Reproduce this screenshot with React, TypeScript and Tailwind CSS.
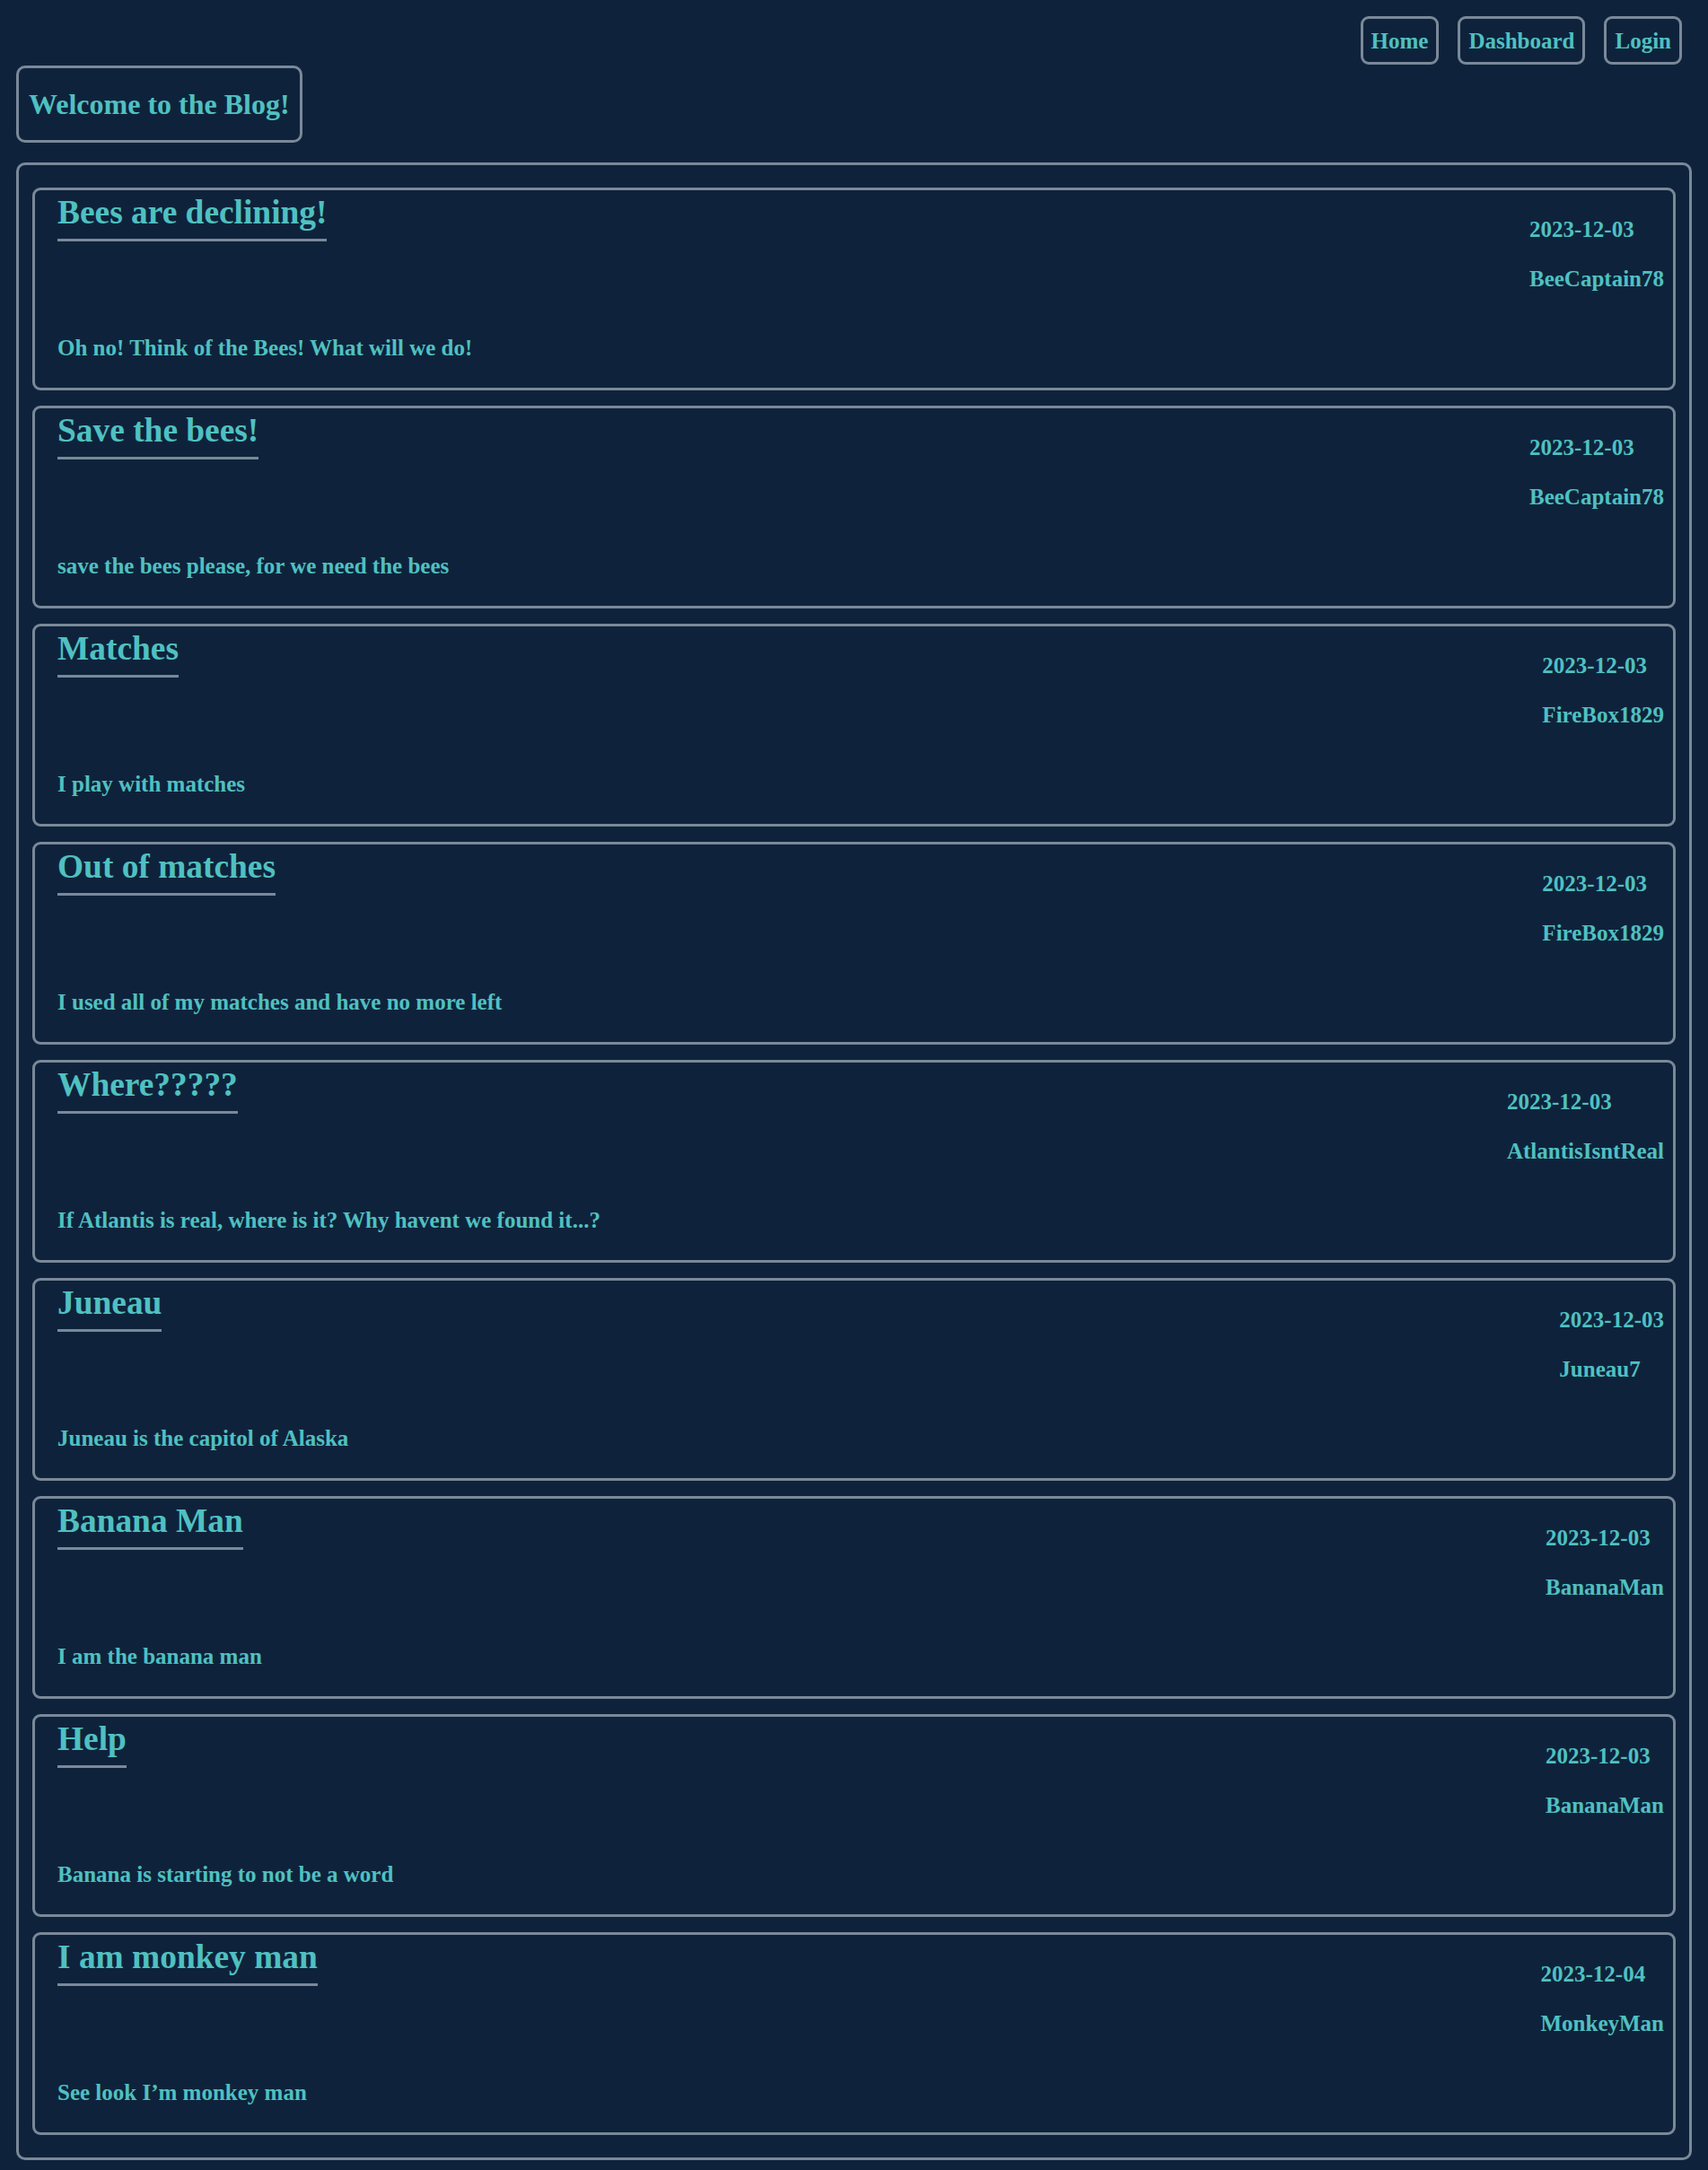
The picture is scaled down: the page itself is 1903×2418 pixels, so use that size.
import React from "react";

type Post = { title: string; date: string; author: string; body: string };

const posts: Post[] = [
  { title: "Bees are declining!", date: "2023-12-03", author: "BeeCaptain78", body: "Oh no! Think of the Bees! What will we do!" },
  { title: "Save the bees!", date: "2023-12-03", author: "BeeCaptain78", body: "save the bees please, for we need the bees" },
  { title: "Matches", date: "2023-12-03", author: "FireBox1829", body: "I play with matches" },
  { title: "Out of matches", date: "2023-12-03", author: "FireBox1829", body: "I used all of my matches and have no more left" },
  { title: "Where?????", date: "2023-12-03", author: "AtlantisIsntReal", body: "If Atlantis is real, where is it? Why havent we found it...?" },
  { title: "Juneau", date: "2023-12-03", author: "Juneau7", body: "Juneau is the capitol of Alaska" },
  { title: "Banana Man", date: "2023-12-03", author: "BananaMan", body: "I am the banana man" },
  { title: "Help", date: "2023-12-03", author: "BananaMan", body: "Banana is starting to not be a word" },
  { title: "I am monkey man", date: "2023-12-04", author: "MonkeyMan", body: "See look I\u2019m monkey man" },
];

function NavButton({ label }: { label: string }) {
  return (
    <a className="block cursor-pointer rounded-[9px] border-[3px] border-[#7a8899] px-[9px] py-[9.5px] text-[25px] leading-[29px]">
      {label}
    </a>
  );
}

function PostCard({ post }: { post: Post }) {
  return (
    <div className="flex h-[226px] justify-between rounded-[9px] border-[3px] border-[#7a8899] pl-[25px] pr-[10px]">
      <div className="flex flex-col items-start">
        <h2 className="mt-[2.6px] border-b-[3px] border-[#7a8899] pb-[8.4px] text-[37.4px] leading-[43px]">
          {post.title}
        </h2>
        <p className="mt-[104.9px] text-[25px] leading-[28.7px]">{post.body}</p>
      </div>
      <div className="mt-[29px] flex flex-col">
        <p className="text-[25px] leading-[29px]">{post.date}</p>
        <p className="mt-[25.5px] text-[25px] leading-[29px]">{post.author}</p>
      </div>
    </div>
  );
}

export default function App() {
  return (
    <div className="min-h-screen bg-[#0e233b] pb-[11px] font-['Liberation_Serif','Times_New_Roman',serif] font-bold text-[#50c0c1]">
      <nav className="flex justify-end gap-[21px] pr-[29px] pt-[18px]">
        <NavButton label="Home" />
        <NavButton label="Dashboard" />
        <NavButton label="Login" />
      </nav>
      <div className="ml-[18px] mt-[1px] w-fit rounded-[10px] border-[3px] border-[#7a8899] px-[11px] py-[22px]">
        <h1 className="text-[32px] leading-[36px]">Welcome to the Blog!</h1>
      </div>
      <main className="mx-[18px] mt-[22px] flex flex-col gap-[17px] rounded-[10px] border-[3px] border-[#7a8899] px-[15px] py-[25px]">
        {posts.map((p) => (
          <PostCard key={p.title} post={p} />
        ))}
      </main>
    </div>
  );
}
